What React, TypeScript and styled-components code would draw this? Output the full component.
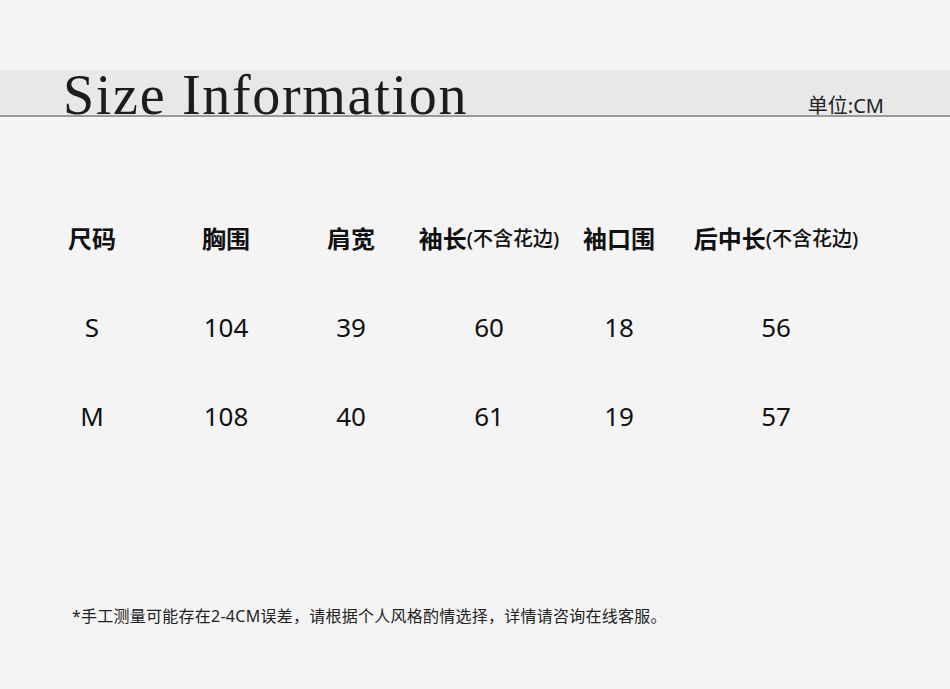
import styled, { createGlobalStyle } from "styled-components";

const GlobalStyle = createGlobalStyle`
  html, body {
    margin: 0;
    padding: 0;
    background: #f4f4f4;
  }
  body {
    font-family: "Noto Sans", "Noto Sans CJK SC", sans-serif;
    color: #111;
  }
`;

const Page = styled.div`
  width: 950px;
  height: 689px;
  background: #f4f4f4;
  display: flex;
  flex-direction: column;
  overflow: hidden;
`;

const HeaderBand = styled.div`
  margin-top: 70px;
  height: 45px;
  background: #e8e8e8;
  border-bottom: 2px solid #9a9a9a;
  display: flex;
  align-items: flex-end;
  justify-content: space-between;
  padding: 0 66px 0 63px;
  overflow: visible;
`;

const Title = styled.h1`
  margin: 0 0 -8px;
  font-family: "Liberation Serif", serif;
  font-weight: 400;
  font-size: 56px;
  line-height: 56px;
  letter-spacing: 1.7px;
  color: #1c1c1c;
`;

const Unit = styled.span`
  font-family: "Noto Sans", "Noto Sans CJK SC", sans-serif;
  font-size: 20px;
  line-height: 20px;
  margin-bottom: -1px;
  color: #222;
`;

const Table = styled.div`
  margin: 76px 0 0 30px;
  display: grid;
  grid-template-columns: 124px 144px 106px 170px 90px 224px;
  grid-auto-rows: 89px;
`;

const Cell = styled.div<{ $head?: boolean }>`
  display: flex;
  align-items: center;
  justify-content: center;
  white-space: nowrap;
  font-family: "Noto Sans", "Noto Sans CJK SC", sans-serif;
  font-size: ${(p) => (p.$head ? "24px" : "26px")};
  font-weight: ${(p) => (p.$head ? 700 : 400)};
  color: #111;
`;

const Note = styled.span`
  font-size: 20px;
  font-weight: 500;
`;

const Footer = styled.p`
  margin: 143px 0 0 72px;
  font-family: "Noto Sans", "Noto Sans CJK SC", sans-serif;
  font-size: 16px;
  letter-spacing: 0.25px;
  color: #222;
`;

const heads = [
  { label: "尺码" },
  { label: "胸围" },
  { label: "肩宽" },
  { label: "袖长", note: "(不含花边)" },
  { label: "袖口围" },
  { label: "后中长", note: "(不含花边)" },
];

const rows = [
  ["S", "104", "39", "60", "18", "56"],
  ["M", "108", "40", "61", "19", "57"],
];

const App = () => {
  return (
    <Page>
      <GlobalStyle />
      <HeaderBand>
        <Title>Size Information</Title>
        <Unit>单位:CM</Unit>
      </HeaderBand>
      <Table>
        {heads.map((h) => (
          <Cell $head key={h.label}>
            {h.label}
            {h.note && <Note>{h.note}</Note>}
          </Cell>
        ))}
        {rows.map((r) =>
          r.map((v, i) => <Cell key={r[0] + i}>{v}</Cell>)
        )}
      </Table>
      <Footer>*手工测量可能存在2-4CM误差，请根据个人风格酌情选择，详情请咨询在线客服。</Footer>
    </Page>
  );
};

export default App;
